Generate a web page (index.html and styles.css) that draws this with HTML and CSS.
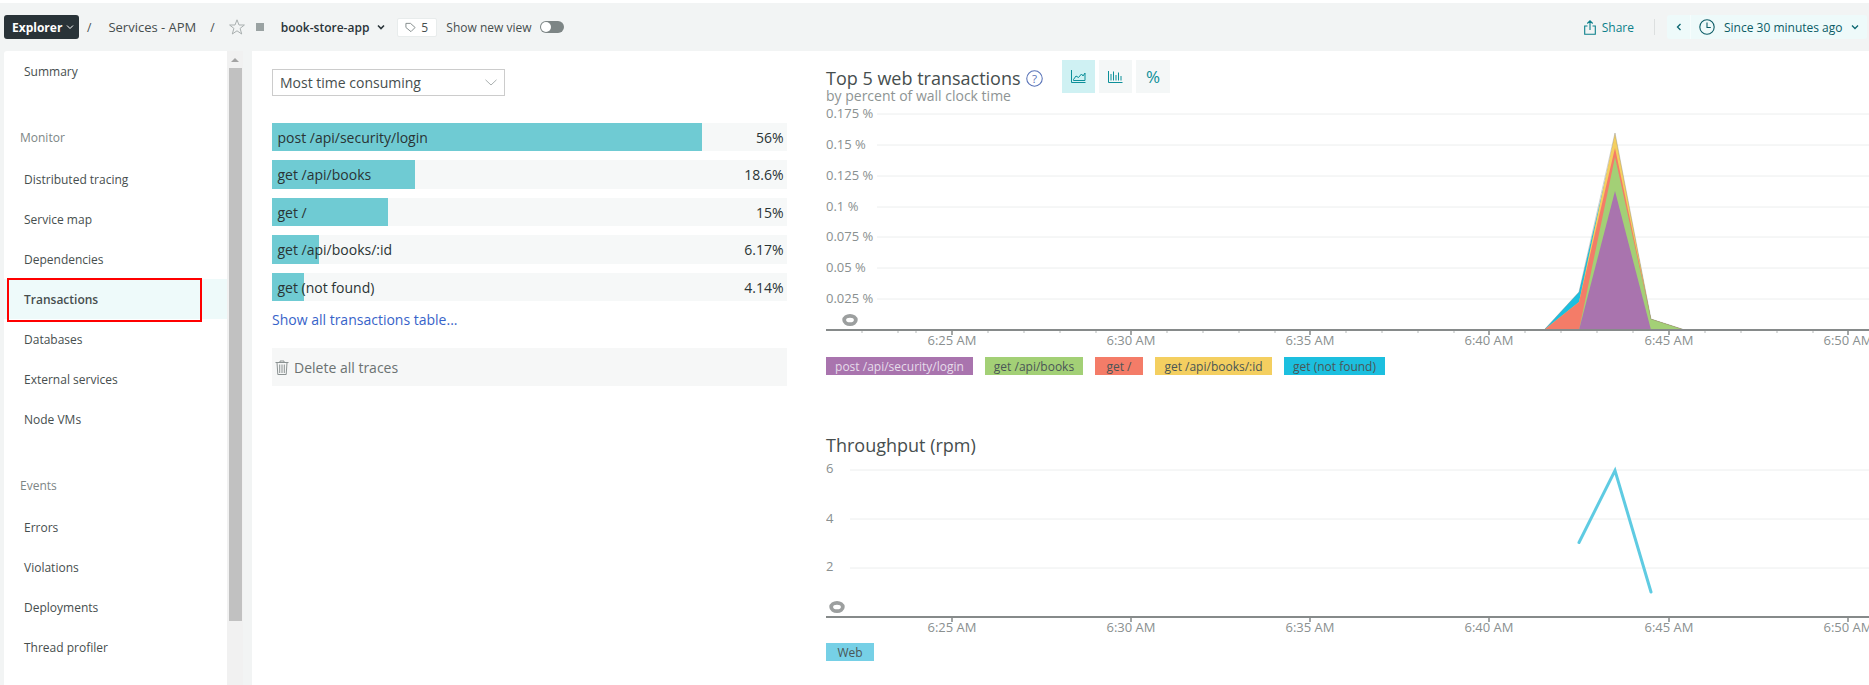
FILE: index.html
```html
<!DOCTYPE html>
<html lang="en">
<head>
    <meta charset="UTF-8">
    <meta name="viewport" content="width=device-width, initial-scale=1.0">
    <title>book-store-app - Transactions</title>
    <link rel="stylesheet" href="styles.css">
</head>
<body>
    <header class="topbar">
        <div class="explorer">Explorer
            <svg class="chev-small" viewBox="0 0 8 6"><path d="M1 1.5 4 4.5 7 1.5" fill="none" stroke="#fff" stroke-width="1"/></svg>
        </div>
        <span class="crumb-sep first">/</span>
        <span class="crumb">Services - APM</span>
        <span class="crumb-sep second">/</span>
        <svg class="star" viewBox="0 0 16 16"><path d="M8 .8 10 6h5.4l-4.3 3.4 1.6 5.6L8 11.8 3.3 15l1.6-5.6L.6 6H6z" fill="none" stroke="#a9afaf" stroke-width="1"/></svg>
        <span class="status-square"></span>
        <span class="app-name">book-store-app</span>
        <svg class="chev-app" viewBox="0 0 8 6"><path d="M1 1.5 4 4.5 7 1.5" fill="none" stroke="#293338" stroke-width="1.6"/></svg>
        <div class="tag-box">
            <svg class="tag-icon" viewBox="0 0 12 12"><path d="M1 1.5h5l5 4.5-4.500 4.500L1 6z" fill="none" stroke="#7d8686" stroke-width="1"/></svg>
            <span>5</span>
        </div>
        <span class="new-view">Show new view</span>
        <span class="toggle"><span class="toggle-knob"></span></span>

        <div class="topbar-right">
            <svg class="share-icon" viewBox="0 0 12 15"><path d="M3.500 6H.7v8.300h10.600V6H8.500M6 10V1M3.300 3.500 6 .8l2.700 2.700" fill="none" stroke="#0b7f8a" stroke-width="1.1"/></svg>
            <span class="share">Share</span>
            <span class="divider"></span>
            <div class="time-box">
                <span class="time-prev">
                    <svg class="chev-left" viewBox="0 0 6 8"><path d="M4.500 1 1.500 4l3 3" fill="none" stroke="#0b6670" stroke-width="1.300"/></svg>
                </span>
                <svg class="clock" viewBox="0 0 16 16"><circle cx="8" cy="8" r="7.200" fill="none" stroke="#0b5c66" stroke-width="1.100"/><path d="M8 3.500V8.500h3.800" fill="none" stroke="#0b5c66" stroke-width="1.100"/></svg>
                <span class="time-text">Since 30 minutes ago</span>
                <svg class="chev-time" viewBox="0 0 8 6"><path d="M1 1.500 4 4.500 7 1.500" fill="none" stroke="#0b6670" stroke-width="1.300"/></svg>
            </div>
        </div>
    </header>

    <div class="layout">
        <aside class="sidebar">
            <nav class="nav">
                <a class="nav-item">Summary</a>
                <div class="nav-label">Monitor</div>
                <a class="nav-item">Distributed tracing</a>
                <a class="nav-item">Service map</a>
                <a class="nav-item">Dependencies</a>
                <a class="nav-item active">Transactions<span class="red-box"></span></a>
                <a class="nav-item">Databases</a>
                <a class="nav-item">External services</a>
                <a class="nav-item">Node VMs</a>
                <div class="nav-label">Events</div>
                <a class="nav-item">Errors</a>
                <a class="nav-item">Violations</a>
                <a class="nav-item">Deployments</a>
                <a class="nav-item">Thread profiler</a>
            </nav>
            <div class="scrollbar">
                <span class="scroll-up"></span>
                <span class="scroll-thumb"></span>
            </div>
        </aside>

        <main class="content">
            <section class="left-col">
                <div class="select">
                    <span>Most time consuming</span>
                    <svg class="select-chev" viewBox="0 0 12 7"><path d="M.5.800 6 6 11.500.800" fill="none" stroke="#a9afaf" stroke-width="1"/></svg>
                </div>
                <div class="bars">
                    <div class="bar-row" style="background-size: 430px 100%"><span>post /api/security/login</span><span>56%</span></div>
                    <div class="bar-row" style="background-size: 143px 100%"><span>get /api/books</span><span>18.6%</span></div>
                    <div class="bar-row" style="background-size: 116px 100%"><span>get /</span><span>15%</span></div>
                    <div class="bar-row" style="background-size: 47px 100%"><span>get /api/books/:id</span><span>6.17%</span></div>
                    <div class="bar-row" style="background-size: 32px 100%"><span>get (not found)</span><span>4.14%</span></div>
                </div>
                <a class="show-all">Show all transactions table...</a>
                <div class="delete-box">
                    <svg class="trash" viewBox="0 0 14 15"><path d="M.5 2.500h13M5 2.500V1h4v1.500M2 2.500l.8 12h8.400l.8-12M4.700 4.500v8.500M7 4.500v8.500M9.300 4.500v8.500" fill="none" stroke="#8b9292" stroke-width="1"/></svg>
                    <span>Delete all traces</span>
                </div>
            </section>

            <section class="right-col">
                <div class="chart-head">
                    <div class="chart-titles">
                        <h2 class="chart-title">Top 5 web transactions
                            <svg class="help" viewBox="0 0 16 16"><circle cx="8" cy="8" r="7.300" fill="none" stroke="#5a74b8" stroke-width="1"/><text x="8" y="11.800" text-anchor="middle" class="help-mark">?</text></svg>
                        </h2>
                        <div class="chart-sub">by percent of wall clock time</div>
                    </div>
                    <div class="chart-btns">
                        <span class="chart-btn active">
                            <svg viewBox="0 0 15 13"><path d="M.5 0v12.500H14.500M2.500 9.500 5 6l2.500 1.500L10.500 4l1.500 2 2-3v7.500H2.500z" fill="none" stroke="#0b8f99" stroke-width="1"/></svg>
                        </span>
                        <span class="chart-btn">
                            <svg viewBox="0 0 15 13"><path d="M.5 1v11.500H14.500M3 10.500V4M5.500 10.500V1.500M8 10.500V5M10.500 10.500V2.500M13 10.500V6" fill="none" stroke="#0b8f99" stroke-width="1"/></svg>
                        </span>
                        <span class="chart-btn pct">%</span>
                    </div>
                </div>

                <svg class="chart top-chart" viewBox="826 104 1043 245">
                    <g class="grid">
                        <path d="M877 114H1869M877 145H1869M877 176H1869M877 207H1869M877 237H1869M877 268H1869M877 299H1869"/>
                    </g>
                    <g class="y-labels">
                        <text x="826" y="118">0.175 %</text>
                        <text x="826" y="149">0.15 %</text>
                        <text x="826" y="180">0.125 %</text>
                        <text x="826" y="211">0.1 %</text>
                        <text x="826" y="241">0.075 %</text>
                        <text x="826" y="272">0.05 %</text>
                        <text x="826" y="303">0.025 %</text>
                    </g>
                    <polygon points="1544,330 1579,292 1615,138 1651,319 1685,330" fill="#1cbfdf"/>
                    <polygon points="1544,330 1579,302 1615,133 1651,319 1685,330" fill="#f4cf60"/>
                    <polygon points="1544,330 1579,302 1615,148 1651,319 1685,330" fill="#f47c68"/>
                    <polygon points="1579,330 1615,157 1651,319 1685,330" fill="#a3d076"/>
                    <polygon points="1579,330 1615,191 1651,330" fill="#a974ae"/>
                    <path class="edge" d="M1544 330 1579 292 1615 133 1651 319 1685 330"/>
                    <path class="axis" d="M826 330H1869"/>
                    <path class="ticks" d="M952 331v4M1131 331v4M1310 331v4M1489 331v4M1669 331v4M1848 331v4"/>
                    <path class="minor-ticks" d="M862 331v2M898 331v2M916 331v2M988 331v2M1024 331v2M1060 331v2M1096 331v2M1167 331v2M1203 331v2M1239 331v2M1275 331v2M1346 331v2M1382 331v2M1418 331v2M1454 331v2M1525 331v2M1561 331v2M1597 331v2M1633 331v2M1705 331v2M1741 331v2M1777 331v2M1813 331v2"/>
                    <g class="x-labels">
                        <text x="952" y="345">6:25 AM</text>
                        <text x="1131" y="345">6:30 AM</text>
                        <text x="1310" y="345">6:35 AM</text>
                        <text x="1489" y="345">6:40 AM</text>
                        <text x="1669" y="345">6:45 AM</text>
                        <text x="1848" y="345">6:50 AM</text>
                    </g>
                    <ellipse class="eye" cx="850" cy="320" rx="5.800" ry="4.200"/>
                </svg>
                <div class="legend">
                    <span class="legend-item purple">post /api/security/login</span>
                    <span class="legend-item green">get /api/books</span>
                    <span class="legend-item red">get /</span>
                    <span class="legend-item yellow">get /api/books/:id</span>
                    <span class="legend-item blue">get (not found)</span>
                </div>

                <h2 class="chart-title throughput">Throughput (rpm)</h2>
                <svg class="chart bottom-chart" viewBox="826 458 1043 176">
                    <g class="grid">
                        <path d="M850 469H1869M850 518H1869M850 567H1869"/>
                    </g>
                    <g class="y-labels">
                        <text x="826" y="472">6</text>
                        <text x="826" y="522">4</text>
                        <text x="826" y="570">2</text>
                    </g>
                    <polyline class="web-line" points="1579,541.500 1615,469.500 1651,591"/>
                    <path class="axis" d="M826 616H1869"/>
                    <path class="ticks" d="M952 617v4M1131 617v4M1310 617v4M1489 617v4M1669 617v4M1848 617v4"/>
                    <g class="x-labels">
                        <text x="952" y="631">6:25 AM</text>
                        <text x="1131" y="631">6:30 AM</text>
                        <text x="1310" y="631">6:35 AM</text>
                        <text x="1489" y="631">6:40 AM</text>
                        <text x="1669" y="631">6:45 AM</text>
                        <text x="1848" y="631">6:50 AM</text>
                    </g>
                    <ellipse class="eye" cx="837" cy="606" rx="5.800" ry="4.200"/>
                </svg>
                <div class="legend bottom-legend">
                    <span class="legend-item web">Web</span>
                </div>
            </section>
        </main>
    </div>
</body>
</html>
```

FILE: styles.css
```css
* {
    box-sizing: border-box;
}
html, body {
    height: 100%;
}
body {
    margin: 0;
    padding-top: 3px;
    background-color: #fff;
    color: #464e4e;
    font-family: "Open Sans", "Liberation Sans", sans-serif;
    font-size: 12px;
    overflow: hidden;
}

/* top bar */
.topbar {
    display: flex;
    align-items: center;
    height: 48px;
    padding-left: 4px;
    background-color: #f2f4f4;
    font-size: 12px;
}
.explorer {
    display: flex;
    align-items: center;
    width: 75px;
    height: 24px;
    padding-left: 8px;
    border-radius: 3px;
    background-color: #293338;
    color: #fff;
    font-weight: 700;
}
.chev-small {
    width: 8px;
    height: 6px;
    margin-left: 4px;
}
.crumb-sep.first {
    margin-left: 8px;
}
.crumb {
    margin-left: 17px;
    font-size: 13px;
}
.crumb-sep.second {
    margin-left: 14px;
}
.star {
    width: 16px;
    height: 16px;
    margin-left: 14px;
}
.status-square {
    width: 8px;
    height: 8px;
    margin-left: 11px;
    background-color: #9aa2a2;
}
.app-name {
    margin-left: 17px;
    color: #293338;
    font-weight: 600;
}
.chev-app {
    width: 8px;
    height: 6px;
    margin-left: 8px;
}
.tag-box {
    display: flex;
    align-items: center;
    width: 40px;
    height: 19px;
    margin-left: 12px;
    padding-left: 7px;
    border: 1px solid #e8ecec;
    border-radius: 2px;
    background-color: #fff;
}
.tag-icon {
    width: 11px;
    height: 11px;
    margin-right: 5px;
}
.new-view {
    margin-left: 9px;
}
.toggle {
    display: flex;
    align-items: center;
    width: 24px;
    height: 12px;
    margin-left: 8px;
    padding-left: 1px;
    border-radius: 6px;
    background-color: #7d8585;
}
.toggle-knob {
    width: 10px;
    height: 10px;
    border-radius: 50%;
    background-color: #fff;
}
.topbar-right {
    display: flex;
    align-items: center;
    margin-left: auto;
    padding-right: 2px;
}
.share-icon {
    width: 12px;
    height: 15px;
}
.share {
    margin-left: 6px;
    color: #0b7f8a;
}
.divider {
    width: 1px;
    height: 16px;
    margin: 0 12px 0 20px;
    background-color: #dcdfdf;
}
.time-box {
    display: flex;
    align-items: center;
    width: 200px;
    height: 24px;
    border-radius: 3px;
    background-color: #eefafa;
    color: #0b5c66;
}
.time-prev {
    display: flex;
    align-items: center;
    justify-content: center;
    width: 24px;
    height: 24px;
    border-right: 1px solid #f6fdfd;
}
.chev-left {
    width: 6px;
    height: 8px;
}
.clock {
    width: 16px;
    height: 16px;
    margin-left: 8px;
}
.time-text {
    margin-left: 9px;
}
.chev-time {
    width: 8px;
    height: 6px;
    margin-left: 8px;
}

/* page columns */
.layout {
    display: flex;
    height: 634px;
    padding-left: 4px;
    background-color: #f2f4f4;
}

/* sidebar */
.sidebar {
    display: flex;
    width: 248px;
    height: 100%;
}
.nav {
    position: relative;
    width: 223px;
    background-color: #fff;
    border-radius: 3px 0 0 0;
}
.nav-item {
    position: relative;
    display: flex;
    align-items: center;
    height: 40px;
    padding-left: 20px;
    color: #464e4e;
}
.nav-item.active {
    background-color: #eefafa;
    font-weight: 600;
}
.red-box {
    position: absolute;
    left: 3px;
    top: -1px;
    width: 195px;
    height: 44px;
    border: 2px solid #f00;
}
.nav-label {
    display: flex;
    align-items: center;
    height: 40px;
    margin: 26px 0 2px;
    padding-left: 16px;
    color: #7d8686;
}
.scrollbar {
    display: flex;
    flex-direction: column;
    align-items: center;
    width: 16px;
    background-color: #f1f1f1;
}
.scroll-up {
    width: 0;
    height: 0;
    margin: 7px 0 6px;
    border-left: 4px solid transparent;
    border-right: 4px solid transparent;
    border-bottom: 4px solid #a3a3a3;
}
.scroll-thumb {
    width: 13px;
    height: 553px;
    background-color: #c1c1c1;
}

/* main */
.content {
    display: flex;
    flex: 1;
    min-width: 0;
    padding-left: 20px;
    background-color: #fff;
}
.left-col {
    width: 514.500px;
    padding-top: 18px;
    flex-shrink: 0;
}
.select {
    display: flex;
    align-items: center;
    justify-content: space-between;
    width: 233px;
    height: 27px;
    padding: 0 7px;
    border: 1px solid #ccc;
    font-size: 14px;
}
.select-chev {
    width: 12px;
    height: 7px;
}
.bars {
    display: flex;
    flex-direction: column;
    gap: 9px;
    margin-top: 27px;
}
.bar-row {
    display: flex;
    align-items: center;
    justify-content: space-between;
    height: 28px;
    padding: 0 3px 0 5.500px;
    background-color: #f6f8f8;
    background-image: linear-gradient(#6fcbd3, #6fcbd3);
    background-repeat: no-repeat;
    color: #2a3434;
    font-size: 14px;
}
.bar-row:nth-child(even) {
    height: 29px;
}
.show-all {
    display: block;
    margin-top: 9px;
    color: #3763c9;
    font-size: 14px;
}
.delete-box {
    display: flex;
    align-items: center;
    height: 38px;
    margin-top: 19px;
    padding-left: 3px;
    background-color: #f6f7f7;
    color: #6b7272;
    font-size: 14px;
}
.trash {
    width: 14px;
    height: 15px;
    margin-right: 5px;
}

/* charts */
.right-col {
    flex: 1;
    min-width: 0;
    margin-left: 39.500px;
}
.chart-head {
    display: flex;
    height: 53px;
}
.chart-titles {
    width: 236px;
    padding-top: 17px;
}
.chart-title {
    margin: 0;
    color: #464e4e;
    font-size: 18px;
    font-weight: 400;
    line-height: 20px;
}
.help {
    width: 17px;
    height: 17px;
    margin-left: 1px;
    vertical-align: -2px;
}
.help-mark {
    fill: #5a74b8;
    font-size: 11px;
}
.chart-sub {
    color: #8e9494;
    font-size: 14px;
    line-height: 16px;
}
.chart-btns {
    display: flex;
    gap: 4px;
    padding-top: 9px;
}
.chart-btn {
    display: flex;
    align-items: center;
    justify-content: center;
    width: 33px;
    height: 33px;
    background-color: #f4f7f7;
}
.chart-btn.active {
    background-color: #cff1f3;
}
.chart-btn svg {
    width: 15px;
    height: 13px;
}
.chart-btn.pct {
    width: 34px;
    color: #0b8f99;
    font-size: 17px;
}
.chart {
    display: block;
    width: 1043px;
}
.top-chart {
    height: 245px;
}
.bottom-chart {
    height: 176px;
    margin-top: 4px;
}
.grid path {
    fill: none;
    stroke: #eceeee;
    stroke-width: 1;
}
.y-labels text, .x-labels text {
    fill: #8a9090;
    font-size: 13px;
}
.x-labels text {
    text-anchor: middle;
}
.axis {
    fill: none;
    stroke: #868a8a;
    stroke-width: 2;
}
.ticks {
    fill: none;
    stroke: #868a8a;
    stroke-width: 1.500;
}
.minor-ticks {
    fill: none;
    stroke: #b5b9b9;
    stroke-width: 1;
}
.edge {
    fill: none;
    stroke: #777;
    stroke-opacity: .5;
    stroke-width: .7;
}
.eye {
    fill: #fff;
    stroke: #9c9f9f;
    stroke-width: 3.800;
}
.web-line {
    fill: none;
    stroke: #5fcbe2;
    stroke-width: 3;
    stroke-linecap: round;
}
.legend {
    display: flex;
    gap: 12px;
    margin-top: 8px;
}
.legend-item {
    display: flex;
    align-items: center;
    justify-content: center;
    height: 18px;
    color: #4a5656;
    font-size: 12px;
}
.purple {
    width: 147px;
    background-color: #a974ae;
    color: #e6dcea;
}
.green {
    width: 98px;
    background-color: #a3d076;
}
.red {
    width: 48px;
    background-color: #f47c68;
}
.yellow {
    width: 117px;
    background-color: #f4cf60;
}
.blue {
    width: 101px;
    background-color: #1cbfdf;
}
.web {
    width: 48px;
    background-color: #76d0e6;
}
.throughput {
    margin-top: 60px;
}
.bottom-legend {
    margin-top: 8px;
}
```
